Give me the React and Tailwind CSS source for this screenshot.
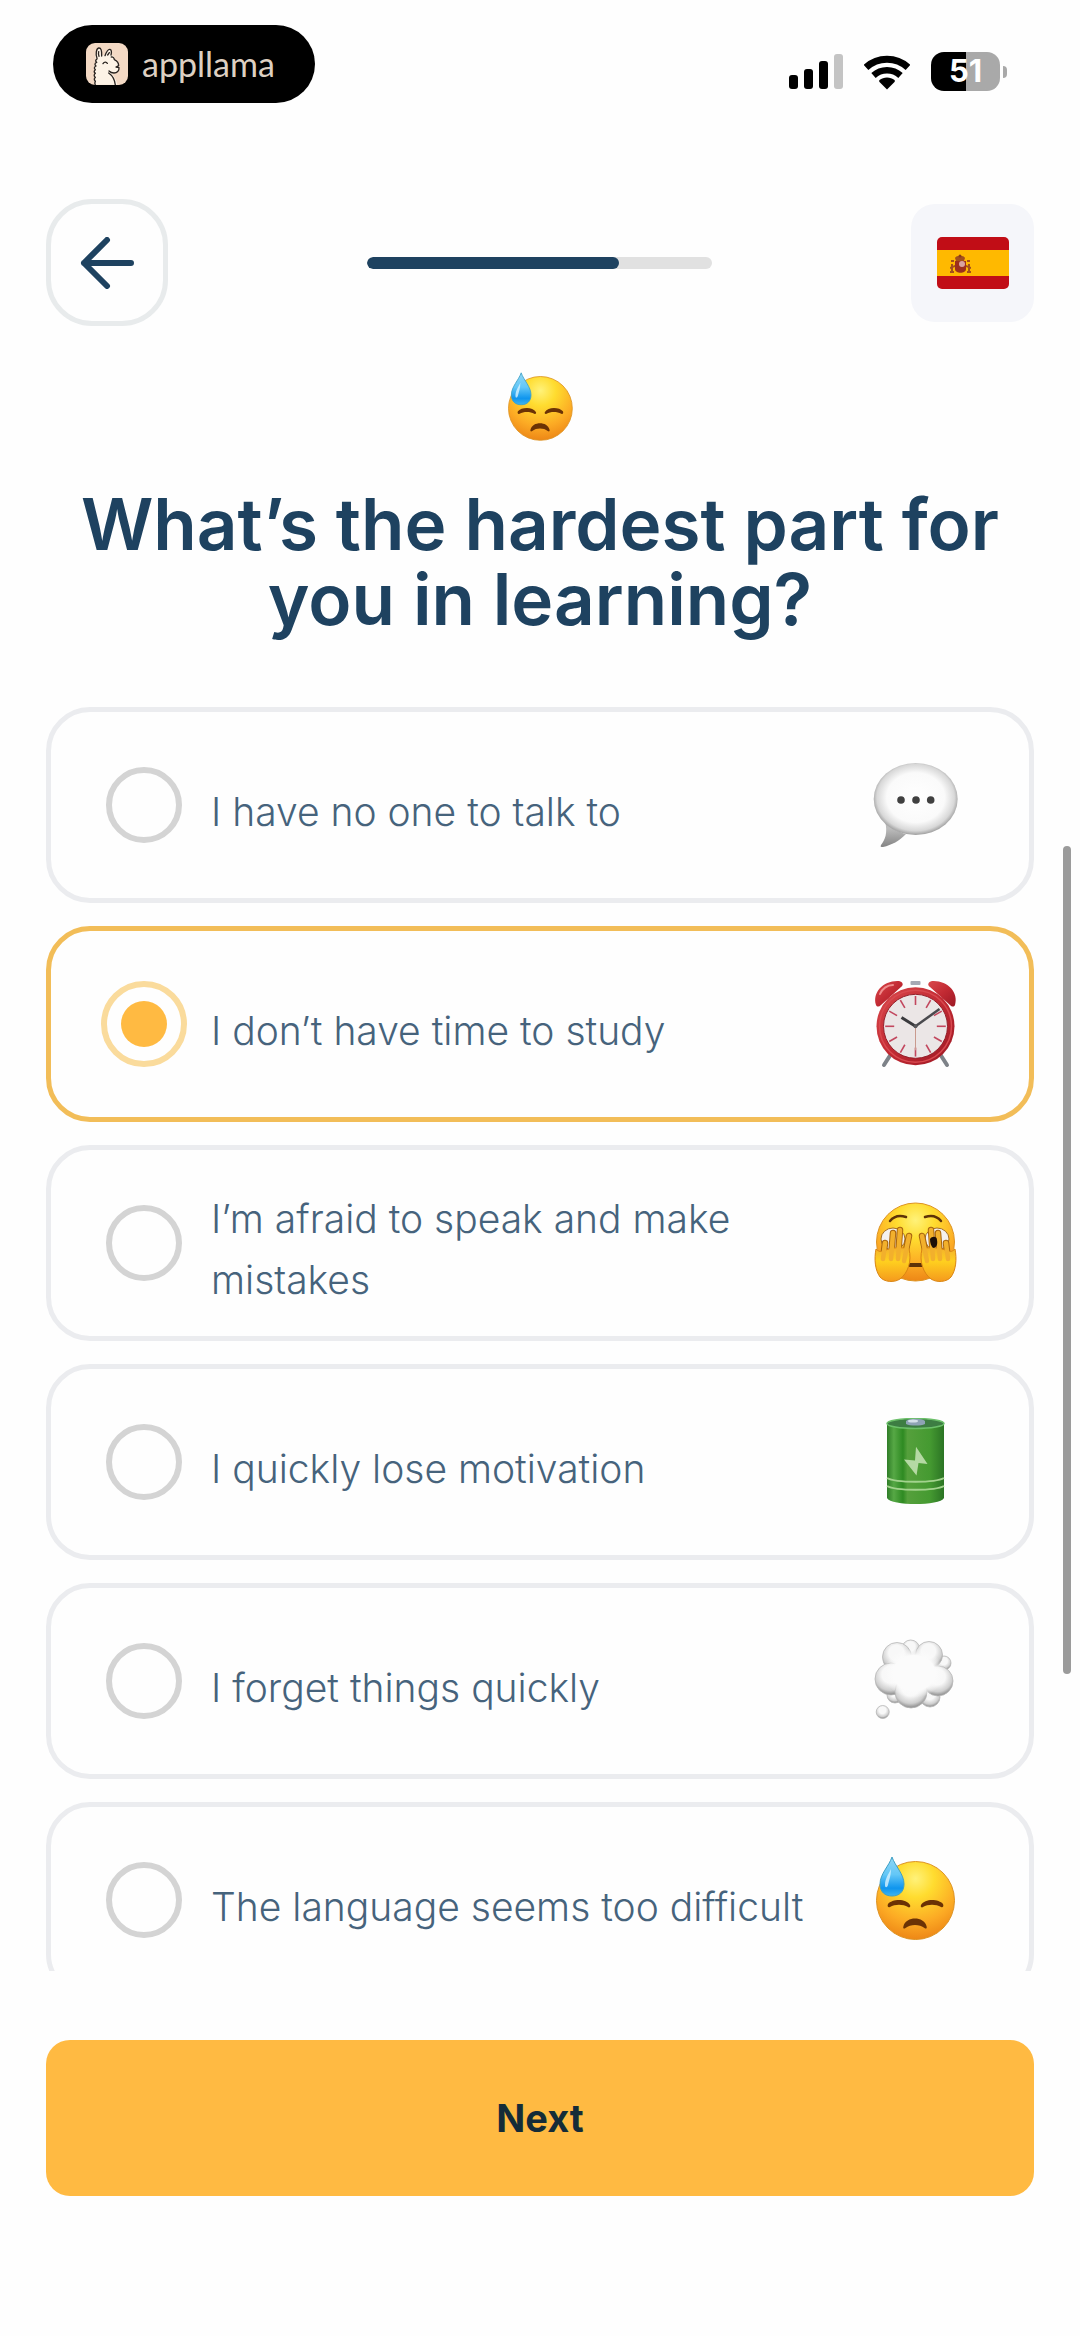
import { useId, useState } from 'react'

function LlamaIcon() {
  return (
    <svg viewBox="0 0 126 126" className="size-[42px] rounded-[9px] bg-[#f3d9c4]" aria-hidden="true">
      <path d="M30 54C26 38 30 16 38 15s10 10 10 22l8-1c3-10 10-18 15-18s6 10 4 18c10 3 12 8 11 12 9 6 14 12 13 24s-6 18-18 18l-3 2c8 10 14 20 16 33H27c-4-12 0-20-1-34-2-12-3-22 4-37z" fill="#fdf3e6" />
      <g fill="none" stroke="#2a2420" strokeWidth="4" strokeLinecap="round" strokeLinejoin="round">
        <path d="M33 46C28 34 31 16 38 15s10 8 9 24M39 40c-2-6-2-10-1-14" />
        <path d="M57 38c4-11 10-20 15-19s5 10 3 17M65 36l5-7" />
        <path d="M76 42c4-1 9 2 9 8 9 4 13 9 13 18l-8 4 9 2c1 10-6 16-15 16-6 0-11-2-15-6" />
        <path d="M51 62c4-6 10-6 13-1" />
        <path d="M68 90c12 8 18 18 20 36" />
        <path d="M33 48c-6 4-4 8-1 10-7 3-6 8-2 11-6 3-6 8-2 11-5 4-4 8 0 11-5 4-4 9 0 12-4 4-3 9 0 12-2 4-2 7 0 11" />
      </g>
    </svg>
  )
}

function StatusBar() {
  return (
    <div className="flex items-center justify-between pt-[25px] pr-[27px] pl-[7px]">
      <div className="flex h-[78px] w-[262px] items-center gap-[14px] rounded-full bg-black pl-[33px]">
        <LlamaIcon />
        <span className="font-['Lato',sans-serif] text-[34px] leading-none text-[#ddd0c2]">appllama</span>
      </div>
      <div className="flex items-center gap-[21px] pt-[15px]">
        <svg viewBox="0 0 54 36" className="h-9 w-[54px]" aria-hidden="true">
          <rect x="0" y="21" width="9" height="14" rx="3" />
          <rect x="15" y="15" width="9" height="20" rx="3" />
          <rect x="30" y="7" width="9" height="28" rx="3" />
          <rect x="45" y="0" width="9" height="35" rx="3" fill="#c4c4c4" />
        </svg>
        <svg viewBox="0 0 46 36" className="h-9 w-[46px]" aria-hidden="true">
          <g fill="none" stroke="black" strokeWidth="7">
            <path d="M2 13.500A31 31 0 0 1 44 13.500" />
            <path d="M9.500 21.500A20 20 0 0 1 36.500 21.500" strokeWidth="6.500" />
          </g>
          <path d="M23 35.500 15.500 28a1.500 1.500 0 0 1 0-2c4-3.500 11-3.500 15 0a1.500 1.500 0 0 1 0 2z" />
        </svg>
        <div className="flex items-center gap-[3px]">
          <div className="flex h-[39px] w-[69px] items-center justify-center rounded-[13px] bg-linear-to-r from-black from-50% to-[#a9a9a9] to-50% font-['Inter',sans-serif] text-[31px] font-bold text-white">
            51
          </div>
          <span className="h-[12px] w-[4px] rounded-r-full bg-[#a9a9a9]" />
        </div>
      </div>
    </div>
  )
}

function SpainFlag() {
  return (
    <svg viewBox="0 0 72 52" className="h-[52px] w-[72px] rounded-[5px]" aria-hidden="true">
      <rect width="72" height="52" fill="#c10d16" />
      <rect y="13" width="72" height="26" fill="#ffb900" />
      <g fill="#a3501c">
        <path d="M18 21c1-3 9-3 10 0l-1 3h-8z" />
        <path d="M18 24h11v8c0 5-11 5-11 0z" fill="#9c2f1d" />
        <path d="M14 23h3v2h-3zM14 27h2v7h-2zM13 34h4v2h-4zM30 23h3v2h-3zM31 27h2v7h-2zM30 34h4v2h-4z" />
        <path d="M13 30l5-2v2l-5 2zM34 30l-5-2v2l5 2z" />
      </g>
      <circle cx="25" cy="27" r="3" fill="#d9a3a0" />
      <circle cx="23" cy="19" r="1.500" fill="#8a3a1a" />
    </svg>
  )
}

function FaceGradient({ id }) {
  return (
    <radialGradient id={id} cx="0.5" cy="0.22" r="0.8">
      <stop offset="0" stopColor="#fff27a" />
      <stop offset="0.3" stopColor="#ffdc2f" />
      <stop offset="0.7" stopColor="#fcaa24" />
      <stop offset="1" stopColor="#ec8415" />
    </radialGradient>
  )
}

function SweatFace({ className }) {
  const id = useId()
  return (
    <svg viewBox="0 0 88 88" className={className} aria-hidden="true">
      <defs>
        <FaceGradient id={`${id}f`} />
        <linearGradient id={`${id}d`} x1="0" y1="0" x2="0" y2="1">
          <stop offset="0" stopColor="#8fd6f5" />
          <stop offset="0.45" stopColor="#63c7f7" />
          <stop offset="0.8" stopColor="#0f95ee" />
          <stop offset="1" stopColor="#3fb4ee" />
        </linearGradient>
      </defs>
      <circle cx="44.500" cy="44.500" r="39" fill={`url(#${id}f)`} stroke="#dd9322" strokeWidth="1" />
      <path d="M21 1c3 9 12 17 12 27 0 8-5 12-12 12S9 36 9 28C9 18 18 10 21 1z" fill={`url(#${id}d)`} stroke="#3d9fc4" strokeWidth="1" />
      <path d="M20 13c-3 6-6 10-6 16 0 3 2 3 3 0 1-5 3-9 3-16z" fill="#d8f3ff" opacity="0.8" />
      <g fill="#6b3205">
        <path d="M17 48c4-5 18-6 22 1 1 2-1 3-2 2-5-3-13-3-18 0-2 1-3-1-2-3z" />
        <path d="M72 48c-4-5-18-6-22 1-1 2 1 3 2 2 5-3 13-3 18 0 2 1 3-1 2-3z" />
        <path d="M32.500 70C35 60 53 60 55.500 70c1 3-1 3-2 2-5-4-14-4-19 0-1 1-3 1-2-2z" />
      </g>
    </svg>
  )
}

function SpeechBubble({ className }) {
  const id = useId()
  return (
    <svg viewBox="0 0 88 88" className={className} aria-hidden="true">
      <defs>
        <radialGradient id={id} cx="0.5" cy="0.48" r="0.53">
          <stop offset="0" stopColor="#ffffff" />
          <stop offset="0.65" stopColor="#fafafa" />
          <stop offset="0.87" stopColor="#d8d8d8" />
          <stop offset="1" stopColor="#949494" />
        </radialGradient>
        <linearGradient id={`${id}t`} x1="0" y1="0" x2="0" y2="1">
          <stop offset="0.3" stopColor="#bcbcbc" />
          <stop offset="1" stopColor="#848484" />
        </linearGradient>
      </defs>
      <path d="M14 60c3 12 0 19-4 24-1 2 0 2 2 2 9-2 16-6 23-13-8-2-15-6-21-13z" fill={`url(#${id}t)`} />
      <ellipse cx="44.700" cy="38" rx="42" ry="36" fill={`url(#${id})`} />
      <g fill="#404040">
        <circle cx="30" cy="39" r="3.800" />
        <circle cx="45" cy="39" r="3.800" />
        <circle cx="59.700" cy="39" r="3.800" />
      </g>
    </svg>
  )
}

const TICKS = [0, 30, 60, 90, 120, 150, 180, 210, 240, 270, 300, 330]

function AlarmClock({ className }) {
  const id = useId()
  return (
    <svg viewBox="0 0 88 88" className={className} aria-hidden="true">
      <defs>
        <linearGradient id={id} x1="0" y1="0" x2="1" y2="1">
          <stop offset="0" stopColor="#d9494c" />
          <stop offset="0.5" stopColor="#c22a33" />
          <stop offset="1" stopColor="#9c1824" />
        </linearGradient>
      </defs>
      <path d="M20 74l-7 11M69 74l7 11" stroke="#7d8288" strokeWidth="4" strokeLinecap="round" />
      <path d="M18 18l6 7M71 18l-6 7" stroke="#7c2a22" strokeWidth="4" />
      <path d="M5 25C1 12 13 0 28 1c4 1 5 4 2 6L10 25c-2 2-4 2-5 0z" fill={`url(#${id})`} />
      <path d="M84 25C88 12 76 0 61 1c-4 1-5 4-2 6l20 18c2 2 4 2 5 0z" fill={`url(#${id})`} />
      <path d="M9 14c2-5 7-9 13-9" stroke="#f08c8c" strokeWidth="2" fill="none" strokeLinecap="round" />
      <rect x="39.500" y="1" width="10" height="4" rx="1" fill="#a5a9b4" />
      <circle cx="44.500" cy="46.300" r="39" fill={`url(#${id})`} />
      <circle cx="44.500" cy="46.300" r="36" fill="none" stroke="#d8494f" strokeWidth="1.500" />
      <circle cx="44.500" cy="46.300" r="32" fill="#ebe6e6" stroke="#94202b" strokeWidth="1" />
      {TICKS.map((angle) => (
        <path key={angle} d="M44.500 16v9" stroke="#c2475e" strokeWidth="1.600" transform={`rotate(${angle} 44.500 46.300)`} />
      ))}
      <path d="M44.500 46.300v24" stroke="#c99a8e" strokeWidth="1" />
      <path d="M44.500 46.300L30.500 37.500" stroke="#3a3a3d" strokeWidth="3" />
      <path d="M44.500 46.300L68.500 29" stroke="#4a4a4e" strokeWidth="2.500" />
      <circle cx="44.500" cy="46.300" r="2" fill="#58585b" />
    </svg>
  )
}

function Hand({ fill }) {
  return (
    <>
      <g stroke="#a9660f" strokeWidth="6.500" strokeLinecap="round" fill="none">
        <path d="M12 60l2-16M20 58l2-24M27 58l2-27M33 60l5-23" />
      </g>
      <path d="M5 50c4 4 6 2 8 2 7-4 19-4 25-2 3 12-1 24-9 30-6 4-16 3-20-2-5-7-6-18-4-28z" fill={fill} stroke="#d98512" strokeWidth="1" />
      <g stroke="#f2b02c" strokeWidth="4.500" strokeLinecap="round" fill="none">
        <path d="M12 60l2-16M20 60l2-26M27 60l2-29M33 62l5-25" />
      </g>
    </>
  )
}

function PeekingFace({ className }) {
  const id = useId()
  return (
    <svg viewBox="0 0 88 88" className={className} aria-hidden="true">
      <defs>
        <FaceGradient id={`${id}f`} />
        <linearGradient id={`${id}h`} x1="0" y1="0" x2="0" y2="1">
          <stop offset="0" stopColor="#f2b02c" />
          <stop offset="0.4" stopColor="#ffd01f" />
          <stop offset="1" stopColor="#f59a1d" />
        </linearGradient>
      </defs>
      <circle cx="44.500" cy="43" r="39" fill={`url(#${id}f)`} stroke="#dd9322" strokeWidth="1" />
      <g fill="none" stroke="#5e3208" strokeWidth="2.500" strokeLinecap="round">
        <path d="M19 22c4-5 10-6 16-4M54 18c6-2 12-1 16 4" />
        <path d="M39 66h12" strokeWidth="4" />
      </g>
      <ellipse cx="22" cy="40" rx="12" ry="11" fill="#f4f1ee" stroke="#a36d22" strokeWidth="1" />
      <ellipse cx="66" cy="40" rx="12" ry="11" fill="#f4f1ee" stroke="#a36d22" strokeWidth="1" />
      <Hand fill={`url(#${id}h)`} />
      <g transform="translate(89 0) scale(-1 1)">
        <Hand fill={`url(#${id}h)`} />
      </g>
      <path d="M59 40c2-3 7-3 7 1 1 5-1 8-4 8-2-2-3-5-3-9z" fill="#1d0f08" />
    </svg>
  )
}

function BatteryEmoji({ className }) {
  const id = useId()
  return (
    <svg viewBox="0 0 88 88" className={className} aria-hidden="true">
      <defs>
        <linearGradient id={id}>
          <stop offset="0" stopColor="#2f7d28" />
          <stop offset="0.12" stopColor="#56a845" />
          <stop offset="0.28" stopColor="#2e8a22" />
          <stop offset="0.36" stopColor="#55a03c" />
          <stop offset="0.75" stopColor="#459a31" />
          <stop offset="1" stopColor="#2b7424" />
        </linearGradient>
      </defs>
      <path d="M16 5v75c4 8 53 8 57 0V5z" fill={`url(#${id})`} />
      <ellipse cx="44.500" cy="5.500" rx="28.500" ry="5" fill="#3d7d43" stroke="#6cc06a" strokeWidth="1.500" />
      <path d="M35 3c3-3 16-3 19 0v3c-4 2-15 2-19 0z" fill="#8ea3b5" />
      <ellipse cx="42" cy="3" rx="5" ry="1.500" fill="#d5e0ea" />
      <path d="M45 28.700L56.500 46l-9-1-2 12.500L33 41.500l11 1z" fill="#b5d9a4" />
      <path d="M16 60c9 5 48 5 57 0M16 68c9 5 48 5 57 0" fill="none" stroke="#a3d38e" strokeWidth="2" />
    </svg>
  )
}

const PUFFS = [
  [39.7, 12, 9],
  [73, 26, 7],
  [24, 58, 8],
  [59, 60, 10],
  [26, 20, 14.5],
  [58, 18, 13.5],
  [20, 42, 16],
  [67, 44, 15],
  [40, 55, 16],
  [11.7, 75, 6.5],
]

function ThoughtBubble({ className }) {
  const id = useId()
  return (
    <svg viewBox="0 0 88 88" className={className} aria-hidden="true">
      <defs>
        <radialGradient id={id} cx="0.48" cy="0.36" r="0.66">
          <stop offset="0.4" stopColor="#f8f8f8" />
          <stop offset="0.75" stopColor="#cfcfcf" />
          <stop offset="1" stopColor="#7e7e7e" />
        </radialGradient>
        <radialGradient id={`${id}c`}>
          <stop offset="0.7" stopColor="#fbfbfb" />
          <stop offset="1" stopColor="#fbfbfb" stopOpacity="0" />
        </radialGradient>
      </defs>
      {PUFFS.map(([cx, cy, r]) => (
        <circle key={cx} cx={cx} cy={cy} r={r} fill={`url(#${id})`} stroke="#b8b8b8" strokeWidth="0.800" />
      ))}
      <ellipse cx="43" cy="36" rx="30" ry="25" fill={`url(#${id}c)`} />
    </svg>
  )
}

const OPTIONS = [
  { id: 'talk', label: 'I have no one to talk to', Icon: SpeechBubble },
  { id: 'time', label: 'I don’t have time to study', Icon: AlarmClock },
  { id: 'afraid', label: 'I’m afraid to speak and make mistakes', Icon: PeekingFace },
  { id: 'motivation', label: 'I quickly lose motivation', Icon: BatteryEmoji },
  { id: 'forget', label: 'I forget things quickly', Icon: ThoughtBubble },
  { id: 'difficult', label: 'The language seems too difficult', Icon: SweatFace },
]

function Option({ option, checked, onSelect }) {
  const { id, label, Icon } = option
  return (
    <label
      htmlFor={id}
      className={`flex h-[196px] shrink-0 cursor-pointer items-center gap-6 rounded-[44px] border-5 pr-[70px] pl-[50px] ${
        checked ? 'border-[#f2bd58]' : 'border-[#ebecef]'
      }`}
    >
      <input
        id={id}
        type="radio"
        name="hardest"
        checked={checked}
        onChange={() => onSelect(id)}
        className="mx-[5px] size-[76px] shrink-0 appearance-none rounded-full border-6 border-[#d4d4d4] checked:mx-0 checked:grid checked:size-[86px] checked:place-items-center checked:border-[#fadb9c] checked:before:size-[46px] checked:before:rounded-full checked:before:bg-[#ffba42]"
      />
      <span className="flex-1 pt-3 text-[39px] leading-[61px] font-light text-[#46637c]">{label}</span>
      <Icon className="size-[88px] shrink-0" />
    </label>
  )
}

export default function App() {
  const [selected, setSelected] = useState('time')

  return (
    <div className="relative flex h-screen flex-col bg-[#fefefe] px-[46px] font-['Inter',sans-serif]">
      <StatusBar />

      <header className="mt-24 flex items-center justify-between">
        <button
          aria-label="Back"
          className="flex h-[127px] w-[122px] items-center justify-center rounded-[46px] border-5 border-[#e8ebec]"
        >
          <svg viewBox="0 0 54 52" className="h-[52px] w-[54px]" fill="none" stroke="#1e4260" strokeWidth="6" strokeLinecap="round" strokeLinejoin="round" aria-hidden="true">
            <path d="M51 26H4M27 3L4 26l23 23" />
          </svg>
        </button>
        <div
          role="progressbar"
          aria-label="Progress"
          aria-valuenow={73}
          className="h-3 w-[345px] overflow-hidden rounded-full bg-[#e1e1e1]"
        >
          <div className="h-full w-[73%] rounded-full bg-[#1e4260]" />
        </div>
        <button aria-label="Spanish" className="flex h-[118px] w-[123px] items-center justify-center rounded-3xl bg-[#f5f6fa]">
          <SpainFlag />
        </button>
      </header>

      <SweatFace className="mt-[46px] size-[72px] self-center" />
      <h1 className="mt-[43px] text-center text-[71px] leading-[75px] font-semibold text-[#1e4260]">
        What’s the hardest part for you in learning?
      </h1>

      <div role="radiogroup" aria-label="Hardest part" className="mt-[70px] flex min-h-0 flex-1 flex-col gap-[23px] overflow-hidden">
        {OPTIONS.map((option) => (
          <Option key={option.id} option={option} checked={selected === option.id} onSelect={setSelected} />
        ))}
      </div>
      <div className="absolute top-[846px] right-[9px] h-[828px] w-2 rounded-full bg-[#9b9b9b]" />

      <footer className="pt-[69px] pb-[140px]">
        <button className="h-[156px] w-full rounded-3xl bg-[#ffba42] text-[38px] font-bold text-[#152c38]">Next</button>
      </footer>
    </div>
  )
}
